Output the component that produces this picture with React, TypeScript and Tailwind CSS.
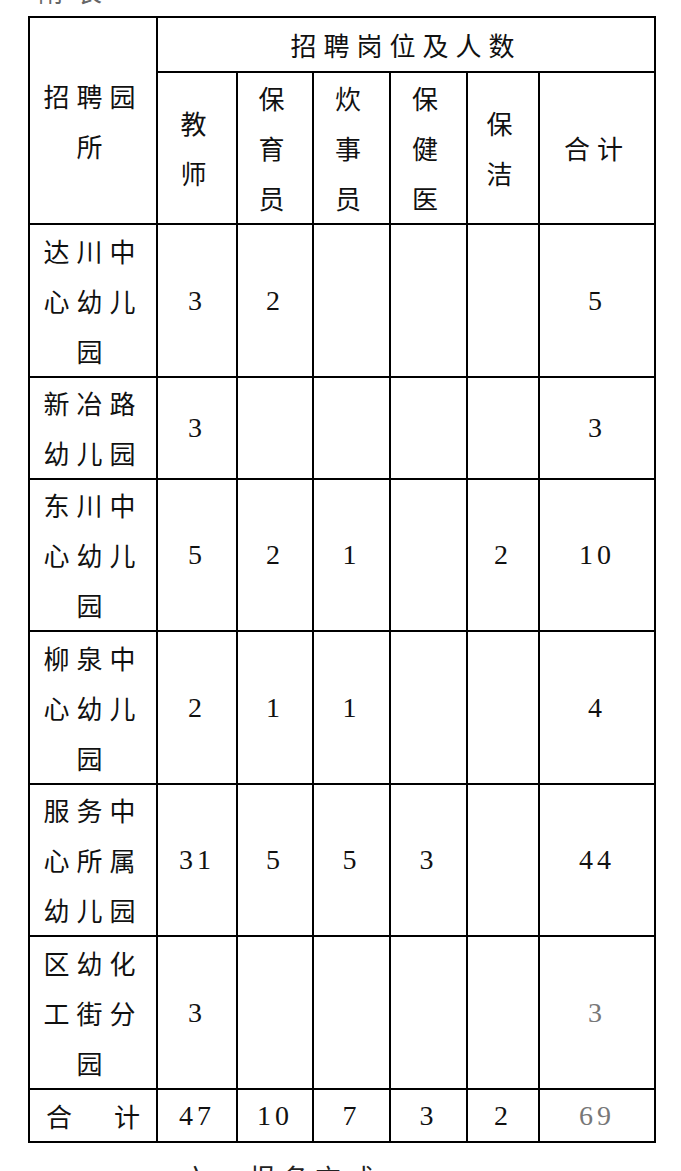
import React from "react";

type Row = {
  name: string[];
  vals: string[];
  h: string;
  grayLast?: boolean;
};

const rows: Row[] = [
  { name: ["达川中", "心幼儿", "园"], vals: ["3", "2", "", "", "", "5"], h: "h-[153px]" },
  { name: ["新冶路", "幼儿园"], vals: ["3", "", "", "", "", "3"], h: "h-[101px]" },
  { name: ["东川中", "心幼儿", "园"], vals: ["5", "2", "1", "", "2", "10"], h: "h-[152px]" },
  { name: ["柳泉中", "心幼儿", "园"], vals: ["2", "1", "1", "", "", "4"], h: "h-[153px]" },
  { name: ["服务中", "心所属", "幼儿园"], vals: ["31", "5", "5", "3", "", "44"], h: "h-[152px]" },
  { name: ["区幼化", "工街分", "园"], vals: ["3", "", "", "", "", "3"], h: "h-[153px]", grayLast: true },
];

const cjk = "font-['Noto_Sans_CJK_SC',sans-serif] text-[26px] leading-[50px] tracking-[7px]";
const num = "font-['Liberation_Serif',serif] text-[28px] tracking-[4px]";
const cell = "border-2 border-black p-0 text-center align-middle";

const Lines = ({ lines }: { lines: string[] }) => (
  <div className={cjk}>
    {lines.map((l, i) => (
      <div key={i}>{l}</div>
    ))}
  </div>
);

export default function App() {
  return (
    <div className="w-[681px] min-h-[1171px] bg-white text-[#111]">
      {/* cropped caption above the table */}
      <div className="h-[16px] overflow-hidden pl-[38px]">
        <div className="-mt-[22px] text-[#666] font-['Noto_Sans_CJK_SC',sans-serif] text-[26px] leading-[26px] tracking-[12px]">
          附表
        </div>
      </div>

      <table className="ml-[28px] w-[626px] table-fixed border-collapse border-2 border-black">
        <colgroup>
          <col className="w-[128px]" />
          <col className="w-[80px]" />
          <col className="w-[76px]" />
          <col className="w-[77px]" />
          <col className="w-[77px]" />
          <col className="w-[72px]" />
          <col className="w-[116px]" />
        </colgroup>
        <tbody>
          <tr className="h-[55px]">
            <td rowSpan={2} className={cell}>
              <Lines lines={["招聘园", "所"]} />
            </td>
            <td colSpan={6} className={cell}>
              <Lines lines={["招聘岗位及人数"]} />
            </td>
          </tr>
          <tr className="h-[152px]">
            <td className={cell}><Lines lines={["教", "师"]} /></td>
            <td className={cell}><Lines lines={["保", "育", "员"]} /></td>
            <td className={cell}><Lines lines={["炊", "事", "员"]} /></td>
            <td className={cell}><Lines lines={["保", "健", "医"]} /></td>
            <td className={cell}><Lines lines={["保", "洁"]} /></td>
            <td className={cell}><Lines lines={["合计"]} /></td>
          </tr>
          {rows.map((r, i) => (
            <tr key={i} className={r.h}>
              <td className={cell}>
                <Lines lines={r.name} />
              </td>
              {r.vals.map((v, j) => (
                <td
                  key={j}
                  className={`${cell} ${num} ${r.grayLast && j === 5 ? "text-[#777]" : ""}`}
                >
                  {v}
                </td>
              ))}
            </tr>
          ))}
          <tr className="h-[53px]">
            <td className={cell}>
              <div className={`${cjk} flex justify-between px-[16px] tracking-normal`}>
                <span>合</span>
                <span>计</span>
              </div>
            </td>
            {["47", "10", "7", "3", "2", "69"].map((v, j) => (
              <td key={j} className={`${cell} ${num} ${j === 5 ? "text-[#777]" : ""}`}>
                {v}
              </td>
            ))}
          </tr>
        </tbody>
      </table>

      {/* next paragraph, cut off by the window */}
      <div className="mt-[21px] pl-[183px] font-['Noto_Sans_CJK_SC',sans-serif] text-[26px] leading-[26px] tracking-[7px] text-[#222]">
        六、报名方式
      </div>
    </div>
  );
}
